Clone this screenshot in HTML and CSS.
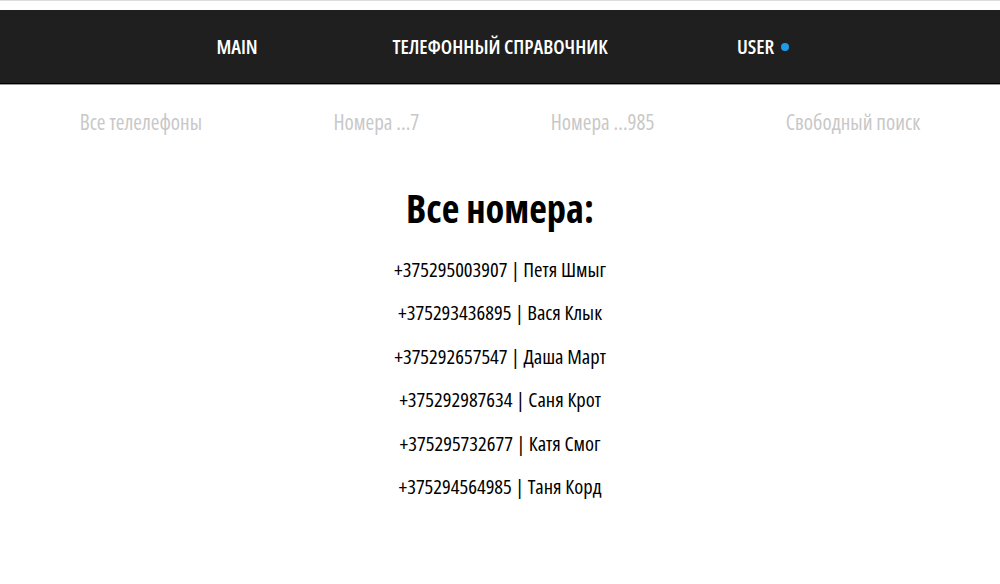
FILE: index.html
```html
<!DOCTYPE html>
<html lang="ru">
<head>
<meta charset="utf-8">
<title>Телефонный справочник</title>
<link rel="stylesheet" href="styles.css">
</head>
<body>
<div class="topline"></div>
<header class="header">
  <nav class="mainnav">
    <a class="navlink" href="#">MAIN</a>
    <a class="navlink" href="#">ТЕЛЕФОННЫЙ СПРАВОЧНИК</a>
    <a class="navlink" href="#">USER<span class="dot"></span></a>
  </nav>
</header>
<nav class="subnav">
  <a class="sublink" href="#">Все телелефоны</a>
  <a class="sublink" href="#">Номера ...7</a>
  <a class="sublink" href="#">Номера ...985</a>
  <a class="sublink" href="#">Свободный поиск</a>
</nav>
<main class="content">
  <h1 class="title">Все номера:</h1>
  <ul class="list">
    <li class="item">+375295003907 | Петя Шмыг</li>
    <li class="item">+375293436895 | Вася Клык</li>
    <li class="item">+375292657547 | Даша Март</li>
    <li class="item">+375292987634 | Саня Крот</li>
    <li class="item">+375295732677 | Катя Смог</li>
    <li class="item">+375294564985 | Таня Корд</li>
  </ul>
</main>
</body>
</html>
```
FILE: styles.css
```css
html, body {
  margin: 0;
  padding: 0;
  background: #ffffff;
}
body {
  font-family: "Open Sans", "DejaVu Sans", sans-serif;
  font-stretch: 75%;
  color: #000;
}
.topline {
  height: 1px;
  background: #dcdcdc;
  margin-bottom: 9px;
}
.header {
  height: 73px;
  background: #1f1f1f;
  border-bottom: 1px solid #000;
  box-shadow: 0 1px 0 #9a9a9a;
  display: flex;
  justify-content: center;
  align-items: center;
}
.mainnav {
  width: 789px;
  display: grid;
  grid-template-columns: repeat(3, 1fr);
  justify-items: center;
}
.navlink {
  color: #ffffff;
  text-decoration: none;
  font-weight: 600;
  font-size: 20px;
  white-space: nowrap;
  display: flex;
  align-items: center;
}
.dot {
  width: 8px;
  height: 8px;
  border-radius: 50%;
  background: #1e9be8;
  margin-left: 7px;
}
.subnav {
  display: flex;
  justify-content: space-around;
  padding: 0 14px;
  margin-top: 24px;
}
.sublink {
  color: #c8c8c8;
  text-decoration: none;
  font-weight: 500;
  font-size: 21px;
  white-space: nowrap;
}
.content {
  text-align: center;
  margin-top: 48px;
}
.title {
  margin: 0;
  font-size: 38.5px;
  font-weight: bold;
  line-height: 48px;
}
.list {
  list-style: none;
  margin: 24px 0 0;
  padding: 0;
  display: flex;
  flex-direction: column;
  gap: 17.4px;
}
.item {
  font-size: 20.5px;
  font-weight: 500;
  line-height: 26px;
}
```
